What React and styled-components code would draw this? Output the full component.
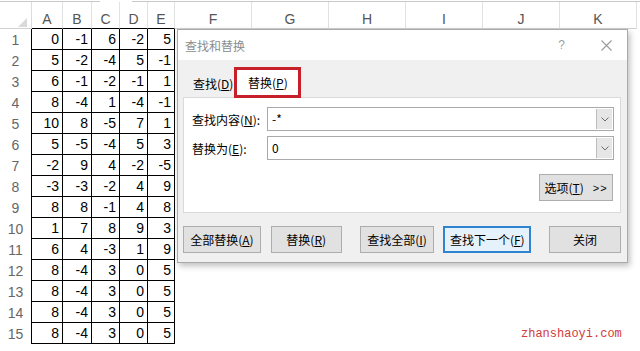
import React from 'react';
import styled, { createGlobalStyle } from 'styled-components';

const GlobalStyle = createGlobalStyle`
  html, body {
    margin: 0;
    padding: 0;
    background: #fff;
  }
  body {
    overflow: hidden;
    font-family: "Liberation Sans", "Noto Sans CJK SC", sans-serif;
  }
`;

const Page = styled.div`
  position: relative;
  width: 640px;
  height: 351px;
  overflow: hidden;
  background: #fff;
`;

const FormulaEdge = styled.div`
  display: flex;
  height: 2px;
`;

const EdgePiece = styled.div`
  height: 1px;
  border-bottom: 1px solid #c9c9c9;
  width: ${p => (p.$w ? `${p.$w}px` : 'auto')};
  flex: ${p => (p.$w ? 'none' : 1)};
  margin-left: ${p => p.$ml || 0}px;
`;

const Sheet = styled.div`
  display: grid;
  grid-template-columns: 32px 31px 29px 28px 28px 27px repeat(6, 77px);
  grid-template-rows: 27px;
  grid-auto-rows: 21px;
  font-size: 14px;
  font-family: "Liberation Sans", sans-serif;
`;

const Corner = styled.div`
  display: flex;
  align-items: flex-end;
  justify-content: flex-end;
  padding: 0 4px 1px 0;
  box-sizing: border-box;
  border-right: 1px solid #dcdcdc;
  border-bottom: 1px solid #d0d0d0;
`;

const ColHead = styled.div`
  display: flex;
  align-items: flex-end;
  justify-content: center;
  box-sizing: border-box;
  padding-bottom: 1px;
  color: #555;
  line-height: 16px;
  border-right: 1px solid #e2e2e2;
  border-bottom: 1px solid ${p => (p.$edge ? '#000' : '#d0d0d0')};
`;

const RowHead = styled.div`
  display: flex;
  align-items: center;
  justify-content: center;
  box-sizing: border-box;
  color: #666;
  border-right: 1px solid #000;
`;

const Cell = styled.div`
  box-sizing: border-box;
  text-align: right;
  padding-right: 3px;
  line-height: 20px;
  color: #000;
  border-right: 1px solid #000;
  border-bottom: 1px solid #000;
`;

const Blank = styled.div``;

const Dialog = styled.div`
  position: absolute;
  left: 177px;
  top: 29px;
  width: 451px;
  height: 234px;
  box-sizing: border-box;
  border: 1px solid #a9a9a9;
  background: #f0f0f0;
  box-shadow: 2px 3px 6px rgba(0, 0, 0, 0.25);
  font-family: "Noto Sans CJK SC", sans-serif;
  font-size: 12px;
  color: #000;
  display: flex;
  flex-direction: column;
`;

const TitleBar = styled.div`
  height: 30px;
  flex: none;
  background: #fff;
  display: flex;
  align-items: center;
  padding: 0 15px 0 7px;
  color: #8c8c8c;
`;

const Help = styled.span`
  margin-left: auto;
  margin-right: 36px;
  color: #a0a0a0;
  font-family: "Liberation Sans", sans-serif;
`;

const Body = styled.div`
  flex: 1;
  display: flex;
  flex-direction: column;
  padding: 7px 6px 0 5px;
`;

const TabRow = styled.div`
  display: flex;
  align-items: stretch;
  height: 30px;
  padding-left: 1px;
  position: relative;
  z-index: 1;
`;

const Tab = styled.div`
  display: flex;
  align-items: center;
  box-sizing: border-box;
  ${p =>
    p.$active
      ? `
    width: 67px;
    height: 31px;
    justify-content: center;
    background: #fff;
    border: 3px solid #c8202a;
  `
      : `
    padding: 0 1px 0 9px;
    margin-top: 2px;
    height: 28px;
  `}
`;

const Panel = styled.div`
  height: 116px;
  box-sizing: border-box;
  background: #fff;
  border: 1px solid #dadada;
  padding: 9px 6px 0 8px;
  display: flex;
  flex-direction: column;
  gap: 5px;
`;

const FieldRow = styled.div`
  display: grid;
  grid-template-columns: 75px 1fr;
  align-items: center;
  height: 24px;
`;

const Input = styled.div`
  height: 24px;
  box-sizing: border-box;
  border: 1px solid #a9a9a9;
  background: #fff;
  display: flex;
  align-items: stretch;
`;

const InputText = styled.span`
  flex: 1;
  padding: 1px 0 0 4px;
  line-height: 20px;
`;

const Drop = styled.div`
  width: 15px;
  margin: 1px 1px 1px 0;
  background: #e6e6e6;
  border-left: 1px solid #bdbdbd;
  display: flex;
  align-items: center;
  justify-content: center;
`;

const Button = styled.div`
  box-sizing: border-box;
  width: ${p => p.$w}px;
  height: 27px;
  margin-left: ${p => p.$ml || 0}px;
  display: flex;
  align-items: center;
  justify-content: center;
  background: ${p => (p.$primary ? '#e5f1fb' : '#e1e1e1')};
  border: ${p => (p.$primary ? '2px solid #2f83d0' : '1px solid #adadad')};
  white-space: nowrap;
`;

const OptionsButton = styled(Button)`
  align-self: flex-end;
  margin-top: 9px;
  margin-right: 1px;
`;

const Arrows = styled.span`
  margin-left: 9px;
  font-family: "Liberation Sans", sans-serif;
  font-size: 11px;
  letter-spacing: 1px;
`;

const ButtonRow = styled.div`
  display: flex;
  margin-top: 13px;
`;

const Watermark = styled.div`
  position: absolute;
  left: 521px;
  top: 327px;
  font-family: "Liberation Mono", monospace;
  font-size: 12px;
  line-height: 14px;
  color: #d23a3c;
`;

const rows = [
  [0, -1, 6, -2, 5],
  [5, -2, -4, 5, -1],
  [6, -1, -2, -1, 1],
  [8, -4, 1, -4, -1],
  [10, 8, -5, 7, 1],
  [5, -5, -4, 5, 3],
  [-2, 9, 4, -2, -5],
  [-3, -3, -2, 4, 9],
  [8, 8, -1, 4, 8],
  [1, 7, 8, 9, 3],
  [6, 4, -3, 1, 9],
  [8, -4, 3, 0, 5],
  [8, -4, 3, 0, 5],
  [8, -4, 3, 0, 5],
  [8, -4, 3, 0, 5],
];

const cols = ['A', 'B', 'C', 'D', 'E', 'F', 'G', 'H', 'I', 'J', 'K'];

const Chevron = () => (
  <svg width="8" height="5" viewBox="0 0 8 5">
    <path d="M0.5 0.5 L4 4 L7.5 0.5" fill="none" stroke="#6b6b6b" strokeWidth="1" />
  </svg>
);

const CloseIcon = () => (
  <svg width="11" height="11" viewBox="0 0 11 11">
    <path d="M0.5 0.5 L10.5 10.5 M10.5 0.5 L0.5 10.5" stroke="#9a9a9a" strokeWidth="1.1" />
  </svg>
);

export default function App() {
  return (
    <Page>
      <GlobalStyle />
      <FormulaEdge>
        <EdgePiece $w={100} />
        <EdgePiece $ml={32} />
      </FormulaEdge>
      <Sheet>
        <Corner>
          <svg width="9" height="9" viewBox="0 0 9 9">
            <polygon points="9,0 9,9 0,9" fill="#d9d9d9" />
          </svg>
        </Corner>
        {cols.map((c, i) => (
          <ColHead key={c} $edge={i < 5}>{c}</ColHead>
        ))}
        {rows.map((r, ri) => (
          <React.Fragment key={ri}>
            <RowHead>{ri + 1}</RowHead>
            {r.map((v, ci) => (
              <Cell key={ci}>{v}</Cell>
            ))}
            {cols.slice(5).map(c => (
              <Blank key={c} />
            ))}
          </React.Fragment>
        ))}
      </Sheet>

      <Dialog>
        <TitleBar>
          <span>查找和替换</span>
          <Help>?</Help>
          <CloseIcon />
        </TitleBar>
        <Body>
          <TabRow>
            <Tab>查找(<u>D</u>)</Tab>
            <Tab $active>替换(<u>P</u>)</Tab>
          </TabRow>
          <Panel>
            <FieldRow>
              <span>查找内容(<u>N</u>):</span>
              <Input>
                <InputText>-*</InputText>
                <Drop><Chevron /></Drop>
              </Input>
            </FieldRow>
            <FieldRow>
              <span>替换为(<u>E</u>):</span>
              <Input>
                <InputText>0</InputText>
                <Drop><Chevron /></Drop>
              </Input>
            </FieldRow>
            <OptionsButton $w={74}>
              选项(<u>T</u>)<Arrows>&gt;&gt;</Arrows>
            </OptionsButton>
          </Panel>
          <ButtonRow>
            <Button $w={78}>全部替换(<u>A</u>)</Button>
            <Button $w={71} $ml={10}>替换(<u>R</u>)</Button>
            <Button $w={75} $ml={18}>查找全部(<u>I</u>)</Button>
            <Button $w={88} $ml={9} $primary>查找下一个(<u>F</u>)</Button>
            <Button $w={72} $ml={18}>关闭</Button>
          </ButtonRow>
        </Body>
      </Dialog>

      <Watermark>zhanshaoyi.com</Watermark>
    </Page>
  );
}
